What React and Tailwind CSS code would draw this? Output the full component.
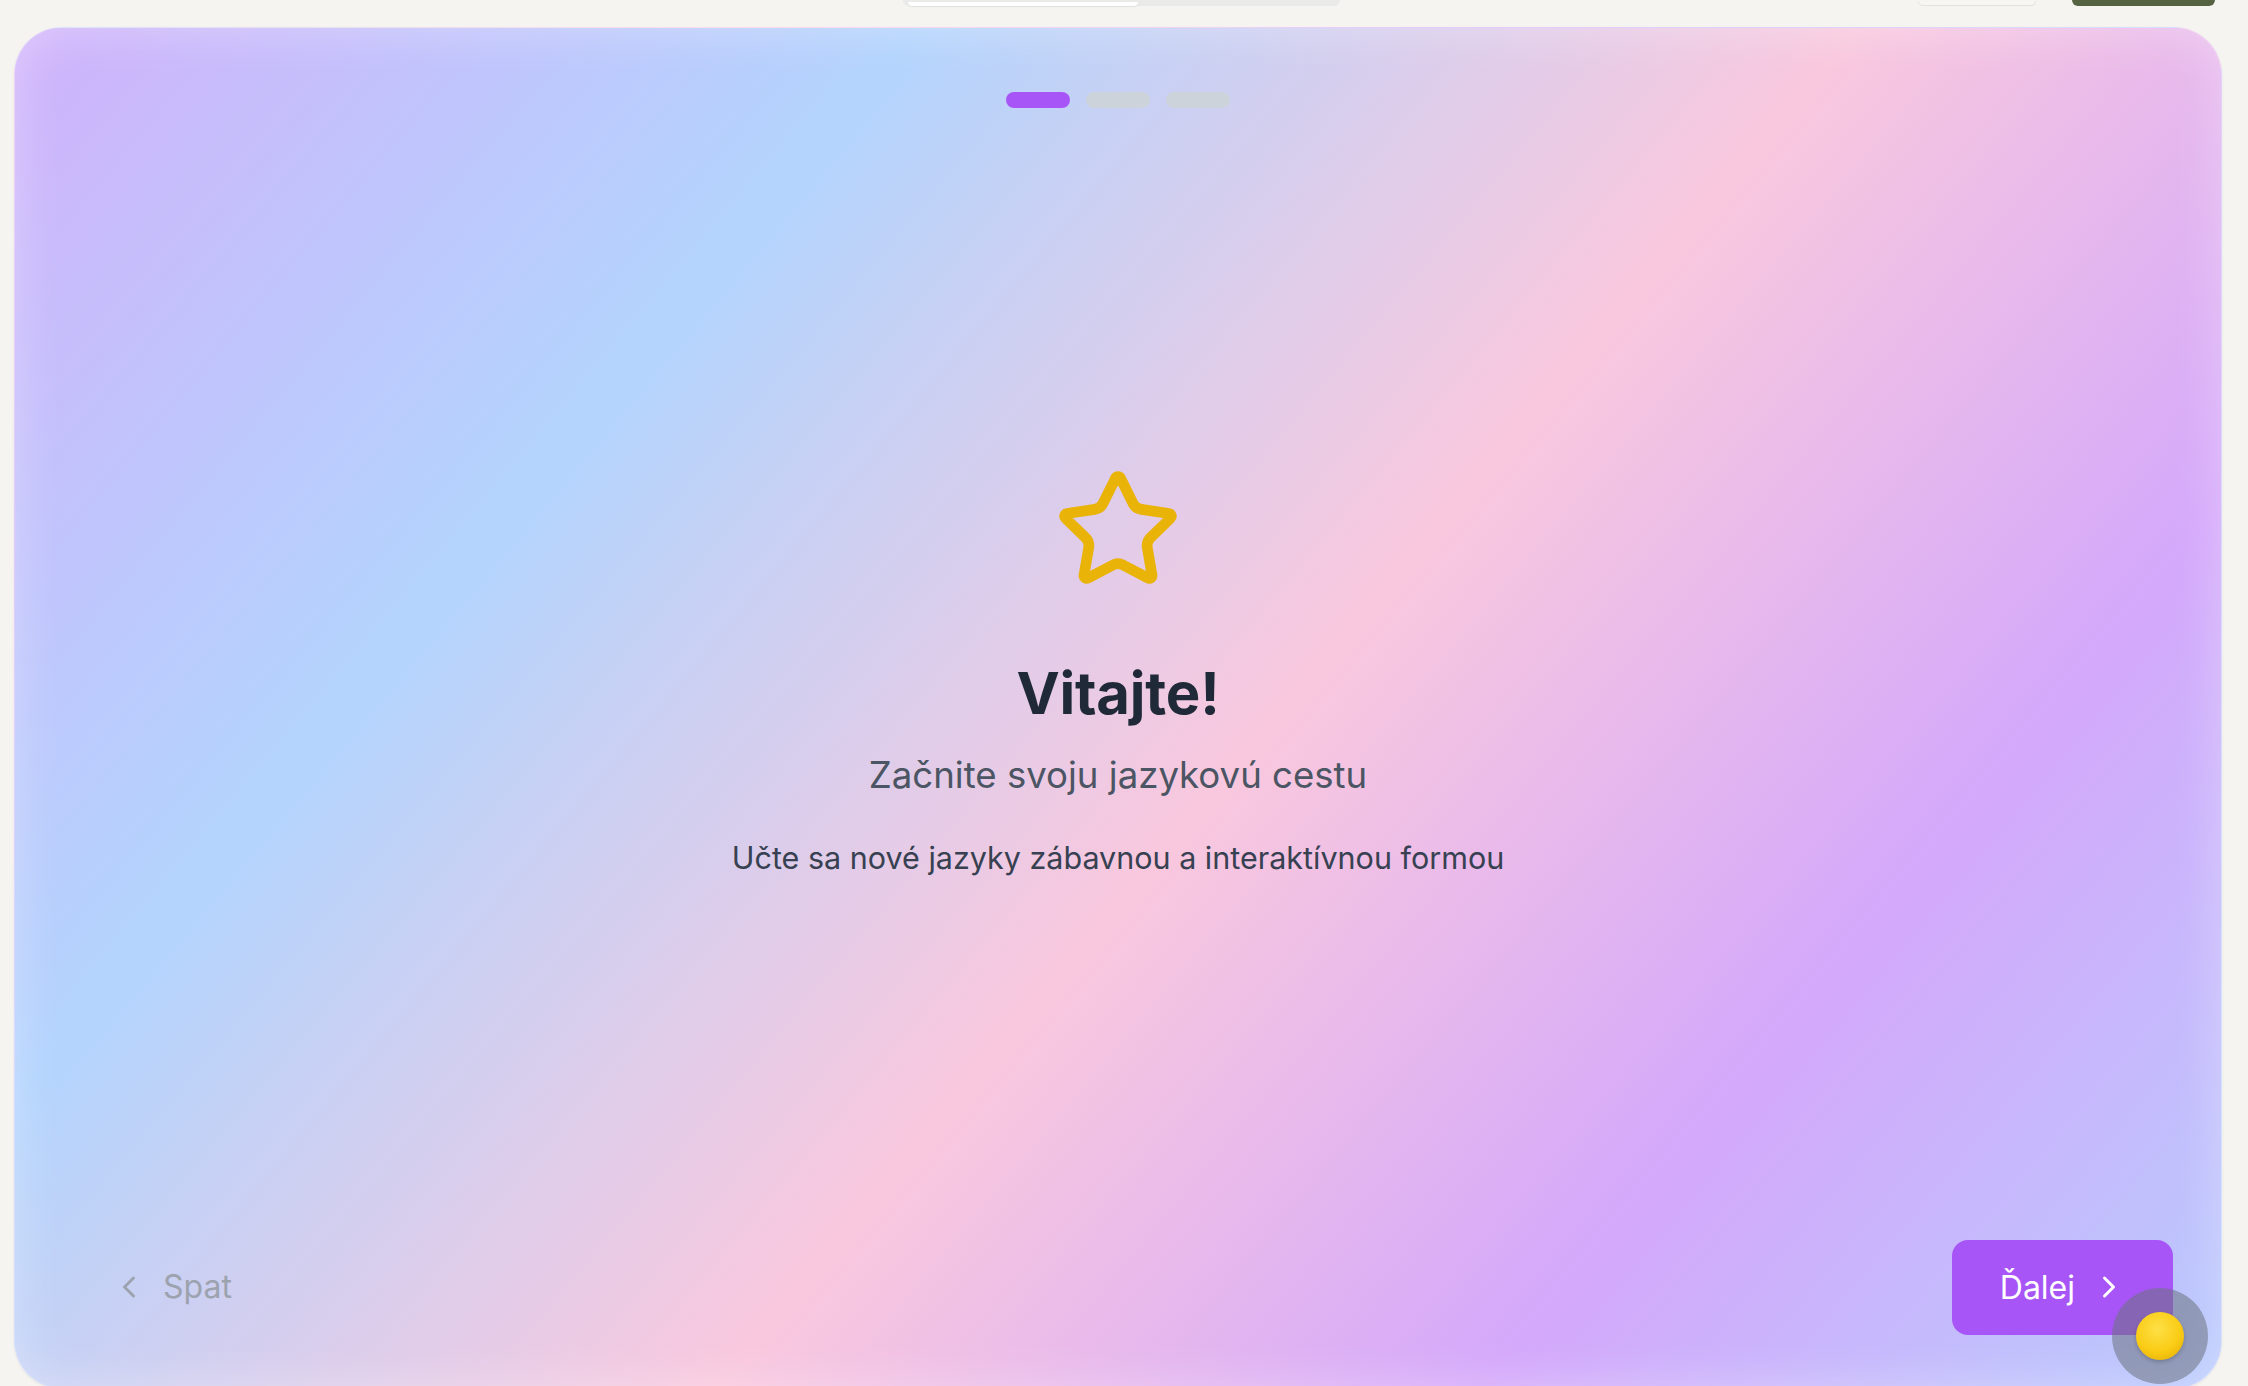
import { ChevronLeft, ChevronRight, Star } from 'lucide-react';

function Dots({ active = 0, count = 3 }) {
  return (
    <div className="flex justify-center gap-4">
      {Array.from({ length: count }).map((_, i) => (
        <span
          key={i}
          className={`h-4 w-16 rounded-full ${i === active ? 'bg-[#a855f7]' : 'bg-[#cdd3db]'}`}
        />
      ))}
    </div>
  );
}

export default function App() {
  return (
    <div className="relative h-[1386px] w-full overflow-hidden bg-[#f5f4f1] font-['Inter','Noto_Sans',sans-serif]">
      {/* header left over from the page above, mostly scrolled away */}
      <div className="flex h-[6px] items-end">
        <div className="ml-[903px] flex h-[6px] w-[437px] items-end rounded-b-xl bg-[#eaeae8] pl-[5px]">
          <div className="h-[4px] w-[230px] rounded-b-lg bg-white shadow-[0_1px_1px_rgba(0,0,0,0.08)]" />
        </div>
        <div className="ml-[578px] h-[5px] w-[118px] rounded-b-xl border border-t-0 border-[#e3e2df] bg-[#f7f6f3]" />
        <div className="ml-[36px] h-[6px] w-[143px] rounded-b-2xl bg-[#556343]" />
      </div>

      <div className="ml-[14px] mt-[21px] flex h-[1362px] w-[2208px] flex-col rounded-[48px] border border-white/40 bg-[linear-gradient(130deg,#d0b2fb_0%,#b3d4fd_27%,#f9c8de_55%,#d4a8fb_78%,#b8cafd_100%)] shadow-[inset_0_0_50px_rgba(255,255,255,0.35),0_1px_3px_rgba(0,0,0,0.06)]">
        <div className="pt-[64px]">
          <Dots active={0} />
        </div>

        <div className="mt-[358px] flex flex-col items-center text-center">
          <Star className="h-32 w-32 text-[#eab308]" strokeWidth={2} />
          <h1 className="mt-[70px] text-[58px] font-bold leading-none tracking-[-0.2px] text-[#1f2937]">Vitajte!</h1>
          <p className="mt-[33px] text-[36.6px] leading-[40px] text-[#4b5563]">Začnite svoju jazykovú cestu</p>
          <p className="mt-[45px] text-[30.5px] leading-[36px] text-[#374151]">
            Učte sa nové jazyky zábavnou a interaktívnou formou
          </p>
        </div>

        <div className="mt-auto flex items-center justify-between px-12 pb-[53px]">
          <button className="flex items-center gap-4 rounded-2xl px-12 py-6 text-[32px] leading-[48px] text-[#9ca3af]">
            <ChevronLeft className="h-9 w-9" strokeWidth={2} />
            <span>Spat</span>
          </button>
          <button className="flex items-center gap-4 rounded-2xl bg-[#a855f7] pl-12 pr-[46px] py-6 text-[32px] leading-[47px] text-white">
            <span>Ďalej</span>
            <ChevronRight className="h-9 w-9" strokeWidth={2} />
          </button>
        </div>
      </div>

      {/* floating dev badge */}
      <div className="absolute left-[2112px] top-[1288px] flex h-24 w-24 items-center justify-center rounded-full bg-[#6b7280]/55">
        <div className="h-12 w-12 rounded-full bg-[radial-gradient(circle_at_45%_35%,#fde047_0%,#facc15_55%,#e0a800_100%)] shadow-[0_2px_4px_rgba(0,0,0,0.2)]" />
      </div>
    </div>
  );
}
